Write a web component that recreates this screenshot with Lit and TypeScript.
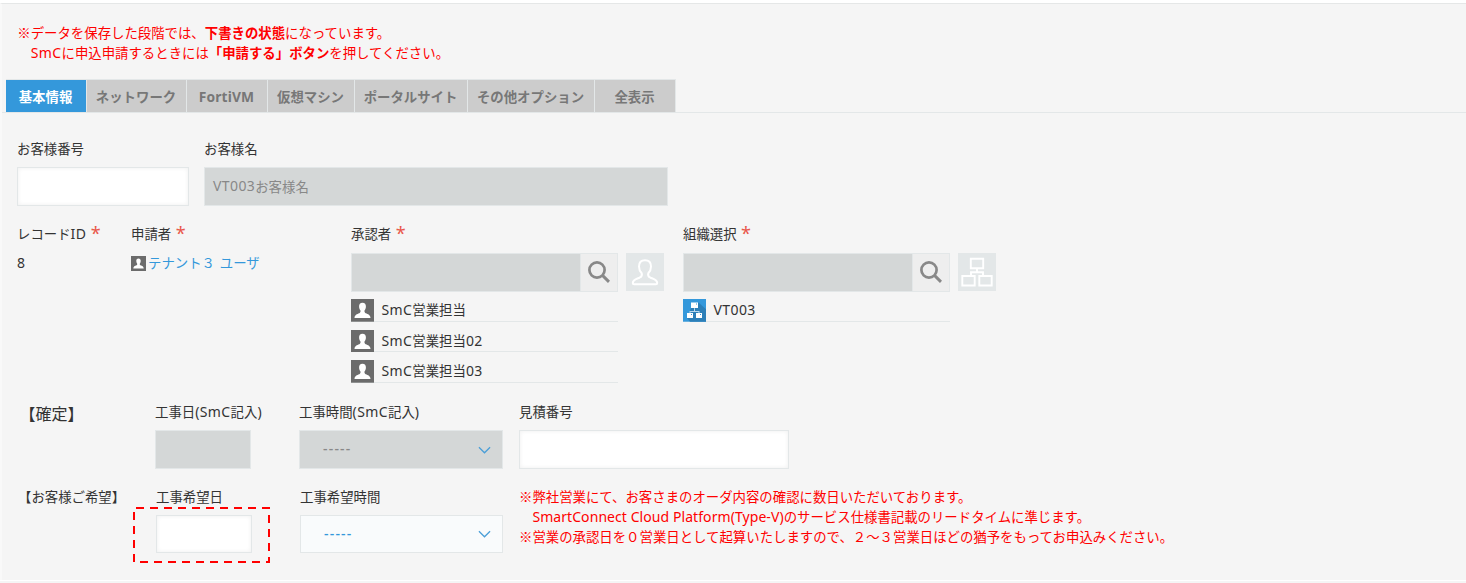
import { LitElement, html, css, svg } from "lit";
import { customElement, property } from "lit/decorators.js";

const personPath =
  "M11.5 3.6c-2.3 0-3.5 1.6-3.4 3.7 0 1.500.6 3 1.400 3.900.2 1.300-.2 2-1.200 2.500-2.300 1-4.700 1.500-4.800 4.700h16c-.1-3.200-2.500-3.700-4.800-4.700-1-.5-1.400-1.200-1.200-2.500.8-.9 1.400-2.400 1.400-3.900.1-2.100-1.100-3.700-3.400-3.700z";

// Latin runs are set in a separate, slightly larger face beside the Japanese text.
const latin = css`
  .en { font-family: "Noto Sans", sans-serif; font-size: 14px; letter-spacing: 0.4px; }
  .en.long { letter-spacing: 0.07px; }
`;

const mixed = (text: string) =>
  text
    .split(/([\x20-\x7e]+)/)
    .filter((part) => part)
    .map((part) => (/^[\x20-\x7e]/.test(part) ? html`<span class="en ${part.length > 8 ? "long" : ""}">${part}</span>` : part));

@customElement("app-icon")
class AppIcon extends LitElement {
  @property() name = "";
  static styles = css`
    :host { display: block; flex: none; }
    svg { display: block; width: 100%; height: 100%; }
  `;
  render() {
    switch (this.name) {
      case "user":
        return html`<svg viewBox="0 0 23 22" preserveAspectRatio="none">
          <rect width="23" height="22" fill="#6b6b6b"/><path d=${personPath} fill="#fff"/></svg>`;
      case "org":
        return html`<svg viewBox="0 0 23 22" preserveAspectRatio="none">
          <rect width="23" height="22" fill="#3498db"/>
          <path d="M15.500 3.500L23 10V22H7L4 18.500L8 9z" fill="#2c7fb8"/>
          <path d="M11.500 9v3.500M7 14v-1.800h9V14" fill="none" stroke="#b9d9ee" stroke-width="1"/>
          <path d="M8 3.300h7v5.500H8zM4 13.500h6v5H4zM13 13.500h6v5h-6z" fill="#fff"/>
          <path d="M13 4.300h1v1h-1zM8 14.500h1v1H8zM17 14.500h1v1h-1z" fill="#3498db"/></svg>`;
      case "search":
        return html`<svg viewBox="0 0 22 22" fill="none" stroke="#888">
          <circle cx="9" cy="9" r="7.600" stroke-width="2.700"/><path d="M14.700 14.700L21 20.800" stroke-width="3"/></svg>`;
      case "pick-user":
        return html`<svg viewBox="0 0 38 38" fill="none" stroke="#fff" stroke-width="2">
          <path d="M19 7.300c-4 0-6 2.600-6 6.200 0 2.600 1 5 2.700 6.800.7 2.300-.3 3.600-2.200 4.400-3.600 1.400-6.700 2-6.700 5.300 0 .9.600 1.300 1.300 1.300h21.800c.7 0 1.300-.4 1.300-1.300 0-3.300-3.100-3.900-6.700-5.300-1.900-.8-2.900-2.100-2.200-4.400 1.700-1.800 2.700-4.200 2.700-6.800 0-3.600-2-6.200-6-6.200z"/></svg>`;
      case "pick-org":
        return html`<svg viewBox="0 0 38 38" fill="none" stroke="#fff" stroke-width="1.900">
          <path d="M12.800 5.800h12.400v9.500H12.800zM4.300 23h12.400v9.500H4.300zM21.300 23h12.400v9.500H21.300zM19 15.300v4M13 23v-3.700h12V23"/></svg>`;
      case "chevron":
        return html`<svg viewBox="0 0 14 8" fill="none" stroke="#4b9fd8" stroke-width="1.400"><path d="M1 1l6 6 6-6"/></svg>`;
    }
    return svg``;
  }
}

@customElement("form-field")
class FormField extends LitElement {
  @property() label = "";
  @property({ type: Boolean }) required = false;
  static styles = [latin, css`
    :host { display: flex; flex-direction: column; flex: none; }
    .label { height: 20px; line-height: 20px; white-space: nowrap; margin: -1px 0 9px; }
    .star { color: #e9574a; font: 18px/16px "Noto Sans", sans-serif; margin-left: 4.500px; display: inline-block; height: 16px; vertical-align: top; padding-top: 2px; }
  `];
  render() {
    return html`<div class="label">${mixed(this.label)}${this.required ? html`<span class="star">*</span>` : ""}</div><slot></slot>`;
  }
}

@customElement("app-root")
class AppRoot extends LitElement {
  static styles = [latin, css`
    :host { display: block; height: 583px; overflow: hidden; background: #f5f5f5; color: #333;
      font-family: "Noto Sans CJK JP", sans-serif; font-size: 13.4px; line-height: 20.2px; }
    * { box-sizing: border-box; }
    .page { height: 581px; border-top: 3px solid #fff; border-bottom: 1px solid #fff; }
    .panel { height: 577px; border-top: 1px solid #e5e7e7; border-left: 2px solid #f9f9f9; position: relative; }
    .note { color: #f00; }
    .line { height: 20.200px; white-space: pre; }
    .top { padding: 18px 0 0 15.300px; height: 75px; }
    .tabs { display: flex; height: 34px; padding-left: 3.500px; border-bottom: 1px solid #e3e7e8; }
    .tab { height: 34px; display: flex; align-items: center; justify-content: center; background: #ccc; color: #777;
      border: 1px solid #e3e7e8; border-left: 0; font-weight: 700; white-space: nowrap; padding-top: 1px; }
    .tab .en { font-size: 13.800px; letter-spacing: 0.15px; padding-top: 1px; }
    .tab.on { background: #3498db; color: #fff; }
    .row { display: flex; padding-left: 15px; }
    .r1 { margin-top: 26px; gap: 15px; }
    .r2 { margin-top: 18px; height: 178px; }
    .r3 { height: 85px; }
    .input { height: 39px; border: 1px solid #e3e7e8; background: #fff; box-shadow: inset 0 0 4px #eee; display: flex; align-items: center; }
    .off { background: #d4d7d7; color: #888; box-shadow: none; }
    .w172 { width: 172px; } .w464 { width: 464px; padding-left: 8px; } .w96 { width: 96px; } .w204 { width: 204px; } .w203 { width: 203px; } .w270 { width: 270px; }
    .c114 { width: 114px; } .c220 { width: 220px; } .c332 { width: 332px; } .c138 { width: 138px; } .c144 { width: 144px; }
    .link { display: flex; align-items: center; color: #3498db; white-space: pre; }
    .link app-icon { width: 15px; height: 15px; margin-right: 2px; margin-top: 3px; }
    .link .en { letter-spacing: 1.200px; }
    .picker { display: flex; margin-top: 1px; }
    .find { width: 230px; }
    .go { width: 37px; height: 39px; background: #eee; border: 1px solid #e3e7e8; border-left: 0; display: flex; align-items: center; justify-content: center; }
    .go app-icon { width: 22px; height: 22px; margin-top: -1px; }
    .pick { width: 38px; height: 38px; margin-left: 8px; background: #e3e7e8; }
    .items { padding-top: 7px; width: 267px; display: flex; flex-direction: column; gap: 8px; }
    .item { height: 22.700px; display: flex; align-items: center; border-bottom: 1px solid #e3e7e8; line-height: 19px; padding-bottom: 1px; }
    .item app-icon { width: 23px; height: 22.700px; margin-right: 7.500px; margin-bottom: -2px; }
    .select { padding: 0 11.500px 0 23px; justify-content: space-between; }
    .select .en { letter-spacing: 1.200px; font-weight: 500; }
    .select app-icon { width: 13px; height: 8px; }
    .on-select { background: #f9fbfc; color: #3498db; box-shadow: none; }
    .big { font-size: 16px; padding: 1px 0 0 2.500px; }
    .dash { position: absolute; left: 130px; top: 502px; width: 140px; height: 58px; }
    .lead { padding-left: 1px; margin-top: -1px; }
    .wish { height: 66px; }
    .wish form-field { padding-left: 1px; }
    .wish .note { margin-top: -1px; }
  `];
  render() {
    const tabs: [string, number][] = [["基本情報", 81], ["ネットワーク", 100], ["FortiVM", 81], ["仮想マシン", 87], ["ポータルサイト", 113], ["その他オプション", 127], ["全表示", 81]];
    const notes = [
      "※弊社営業にて、お客さまのオーダ内容の確認に数日いただいております。",
      "　SmartConnect Cloud Platform(Type-V)のサービス仕様書記載のリードタイムに準じます。",
      "※営業の承認日を０営業日として起算いたしますので、２～３営業日ほどの猶予をもってお申込みください。",
    ];
    return html`<div class="page"><div class="panel">
      <div class="top note">
        <div class="line">※データを保存した段階では、<b>下書きの状態</b>になっています。</div>
        <div class="line">${mixed("　SmCに申込申請するときには")}<b>「申請する」ボタン</b>を押してください。</div>
      </div>
      <div class="tabs">${tabs.map(([t, w], i) => html`<div class="tab ${i ? "" : "on"}" style="width:${w}px">${mixed(t)}</div>`)}</div>
      <div class="row r1">
        <form-field label="お客様番号"><div class="input w172"></div></form-field>
        <form-field label="お客様名"><div class="input off w464">${mixed("VT003お客様名")}</div></form-field>
      </div>
      <div class="row r2">
        <form-field class="c114" label="レコードID" required><div>${mixed("8")}</div></form-field>
        <form-field class="c220" label="申請者" required><div class="link"><app-icon name="user"></app-icon>${mixed("テナント３ ユーザ")}</div></form-field>
        <form-field class="c332" label="承認者" required>
          <div class="picker"><div class="input off find"></div><div class="go"><app-icon name="search"></app-icon></div><app-icon class="pick" name="pick-user"></app-icon></div>
          <div class="items">${["SmC営業担当", "SmC営業担当02", "SmC営業担当03"].map((t) => html`<div class="item"><app-icon name="user"></app-icon>${mixed(t)}</div>`)}</div>
        </form-field>
        <form-field label="組織選択" required>
          <div class="picker"><div class="input off find"></div><div class="go"><app-icon name="search"></app-icon></div><app-icon class="pick" name="pick-org"></app-icon></div>
          <div class="items"><div class="item"><app-icon name="org"></app-icon>${mixed("VT003")}</div></div>
        </form-field>
      </div>
      <div class="row r3">
        <div class="c138 big">【確定】</div>
        <form-field class="c144" label="工事日(SmC記入)"><div class="input off w96"></div></form-field>
        <form-field class="c220" label="工事時間(SmC記入)"><div class="input off select w204">${mixed("-----")}<app-icon name="chevron"></app-icon></div></form-field>
        <form-field label="見積番号"><div class="input w270"></div></form-field>
      </div>
      <div class="row wish">
        <div class="c138 lead">【お客様ご希望】</div>
        <form-field class="c144" label="工事希望日"><div class="input w96"></div></form-field>
        <form-field class="c220" label="工事希望時間"><div class="input on-select select w203">${mixed("-----")}<app-icon name="chevron"></app-icon></div></form-field>
        <div class="note">${notes.map((n) => html`<div class="line">${mixed(n)}</div>`)}</div>
      </div>
      <svg class="dash" viewBox="0 0 140 58" fill="none" stroke="#f00" stroke-width="2" stroke-dasharray="8 6" stroke-dashoffset="-2"><path d="M2 2H137V56H2z"/></svg>
    </div></div>`;
  }
}
